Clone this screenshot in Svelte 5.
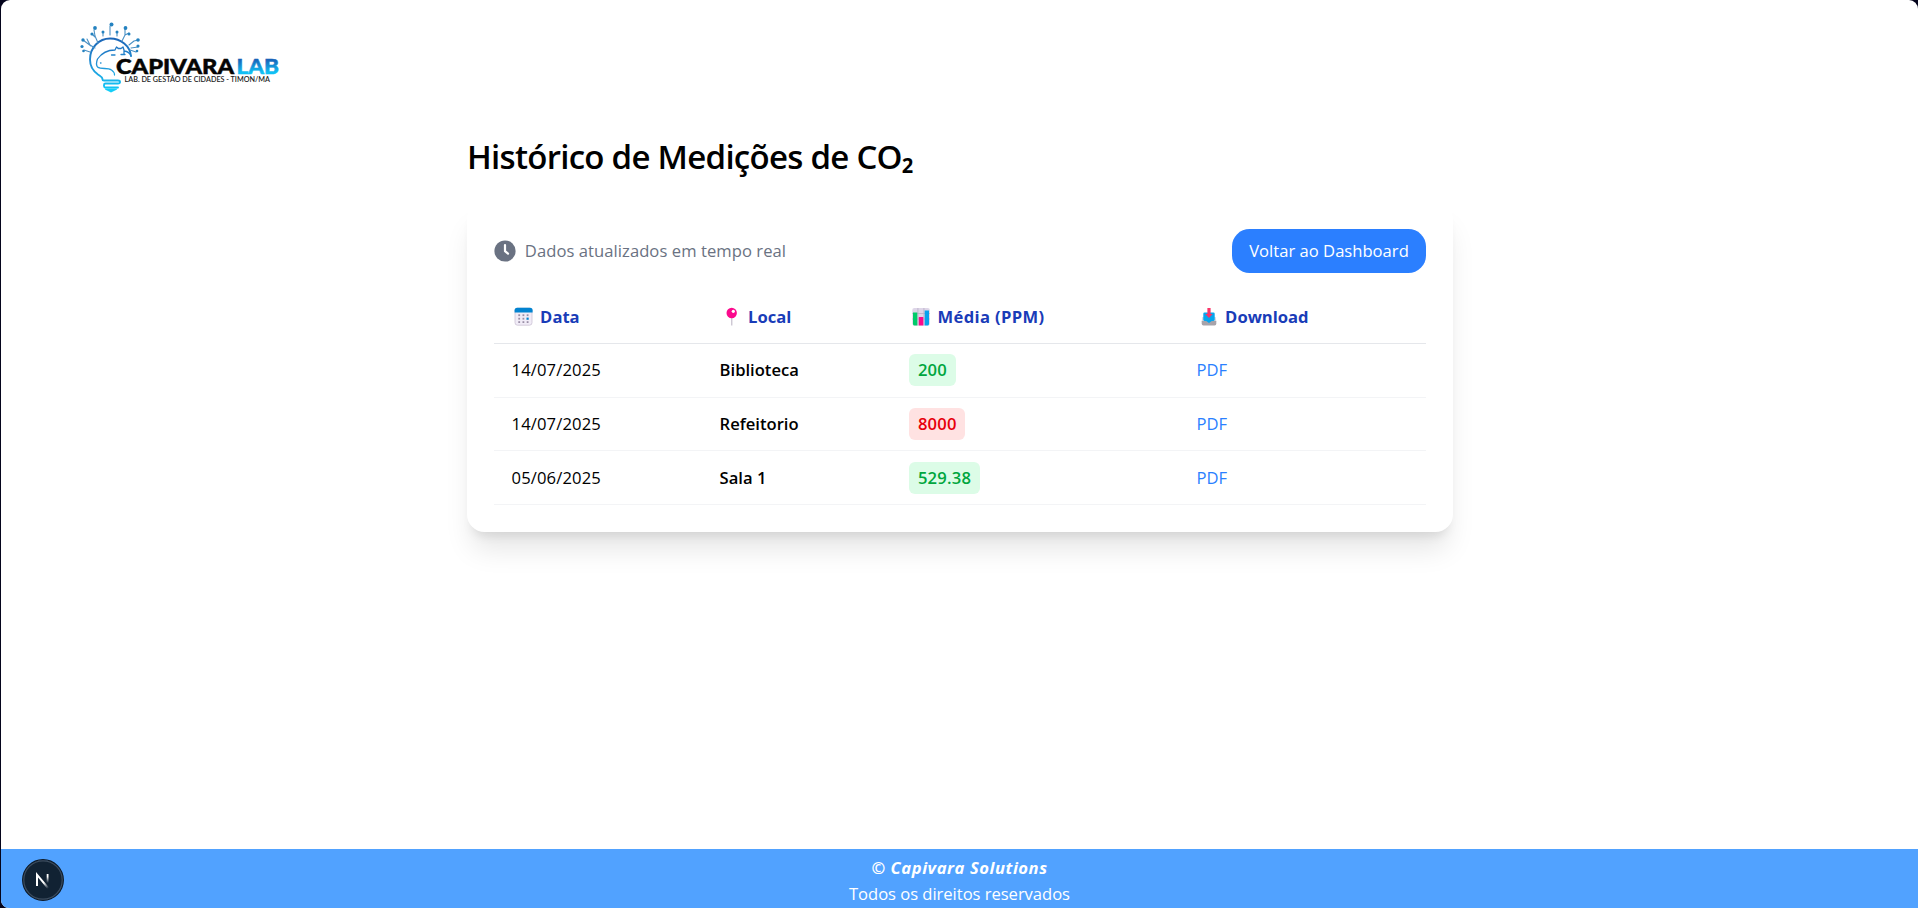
<script>
  const rows = [
    { date: '14/07/2025', place: 'Biblioteca', value: '200', high: false },
    { date: '14/07/2025', place: 'Refeitorio', value: '8000', high: true },
    { date: '05/06/2025', place: 'Sala 1', value: '529.38', high: false }
  ];
</script>

<div class="window">
  <div class="page">
    <header>
      <svg class="logo" width="220" height="80" viewBox="70 18 220 80" role="img" aria-label="Capivara Lab">
        <defs>
          <linearGradient id="bulb" gradientUnits="userSpaceOnUse" x1="0" y1="36" x2="0" y2="92">
            <stop offset="0" stop-color="#1b62b5" />
            <stop offset="0.5" stop-color="#2492d6" />
            <stop offset="1" stop-color="#0fcdfa" />
          </linearGradient>
          <linearGradient id="lab" gradientUnits="userSpaceOnUse" x1="0" y1="58" x2="0" y2="74">
            <stop offset="0.1" stop-color="#1763b8" />
            <stop offset="0.9" stop-color="#10c0f4" />
          </linearGradient>
        </defs>
        <g fill="none" stroke="url(#bulb)" stroke-linecap="round" stroke-linejoin="round">
          <path stroke-width="1.900" d="M131 56C130 46 121 38.500 110 38.500c-11 0-20 9-20 21 0 7 3 11.500 8 15 3 2 4.500 2.500 4.500 4.500v.5q0 1 1.500 1h14q2 0 2 1.500t-2 1.500h-12.500q-1.500 0-1.500 1.500v1q0 1.500 1.500 1.500h12.500" />
          <path stroke-width="1.300" d="M121 54.500h4m-13 .5h3M115 50l1.500-3 2 1.500M118 48.500h3l2-1.500 1 3v4M115 50c-9 0-14 4-17.500 9q-2 5 0 8c4 3 10 0 14 3q3 2 3 5M124 51c4 .5 6 2 7 5M100.500 63h.5M111.500 55h3" />
          <path stroke-width="1.100" stroke="#4a90c4" d="M95 48l-5-3-3-6M91 46l-8-6M90 52l-6-2M98 43l-3-7-1-6M95 37l-3-3M103 36v-4M110 35v-9M117 36v-4M122 41l3-6v-7M125 35l4-2M129 45l5-4 4-1M131 48l7-1M130 50l6 2" />
        </g>
        <path fill="#14cef8" d="M104.500 88.500h13q-.5 1.500-2.500 2l-4 2-4-2q-2-.5-2.500-2z" />
        <g fill="#2482c0">
          <circle cx="83" cy="40" r="1.700" /><circle cx="82" cy="46.500" r="1.600" /><circle cx="83.500" cy="51" r="1.300" />
          <circle cx="92" cy="34" r="1.600" /><circle cx="95" cy="28" r="1.900" /><circle cx="103" cy="32" r="1.500" />
          <circle cx="111.500" cy="24.500" r="2" /><circle cx="117" cy="32" r="1.500" /><circle cx="125.500" cy="28" r="1.900" />
          <circle cx="129" cy="34" r="1.500" /><circle cx="138" cy="40" r="1.800" /><circle cx="138" cy="46" r="1.600" />
          <circle cx="137" cy="51" r="1.300" />
        </g>
        <text class="brand" x="116" y="73.500" textLength="118" lengthAdjust="spacingAndGlyphs" fill="#050505" stroke="#050505">CAPIVARA</text>
        <text class="brand" x="236.500" y="73.500" textLength="42.500" lengthAdjust="spacingAndGlyphs" fill="url(#lab)" stroke="url(#lab)">LAB</text>
        <text class="tag" x="124.500" y="82.300" textLength="145.500" lengthAdjust="spacingAndGlyphs" fill="#222">LAB. DE GESTÃO DE CIDADES - TIMON/MA</text>
      </svg>
    </header>

    <main>
      <h1>Histórico de Medições de CO₂</h1>
      <section class="card">
        <div class="bar">
          <div class="status">
            <svg width="22" height="22" viewBox="0 0 22 22" aria-hidden="true">
              <circle cx="11" cy="11" r="10.600" fill="#6a7282" />
              <path d="M11 5v6.200l3 2.500" fill="none" stroke="#fff" stroke-width="2.200" stroke-linecap="round" stroke-linejoin="round" />
            </svg>
            <span>Dados atualizados em tempo real</span>
          </div>
          <button>Voltar ao Dashboard</button>
        </div>

        <table>
          <colgroup><col class="c1" /><col class="c2" /><col class="c3" /><col class="c4" /></colgroup>
          <thead>
            <tr>
              <th><div class="head">
                <svg width="24" height="20" viewBox="0 0 24 20" aria-hidden="true">
                  <rect x="3" y="1.200" width="17" height="17" rx="2.500" fill="#f1ecf7" stroke="#cbc3d4" stroke-width=".8" />
                  <path d="M2.600 5.500V3.300q0-2.500 2.500-2.500h13q2.500 0 2.500 2.500v2.200z" fill="#0283d0" />
                  <g fill="#998ea6">
                    <rect x="6.300" y="7.300" width="1.800" height="1.800" /><rect x="10.500" y="7.300" width="1.800" height="1.800" /><rect x="14.700" y="7.300" width="1.800" height="1.800" />
                    <rect x="6.300" y="10.800" width="1.800" height="1.800" /><rect x="10.500" y="10.800" width="1.800" height="1.800" />
                    <rect x="6.300" y="14.200" width="1.800" height="1.800" /><rect x="10.500" y="14.200" width="1.800" height="1.800" />
                    <rect x="14.700" y="14.200" width="1.800" height="1.800" />
                  </g>
                  <rect x="14.500" y="10.600" width="2.200" height="2.200" fill="#0283d0" />
                </svg>
                <span>Data</span>
              </div></th>
              <th><div class="head">
                <svg width="24" height="20" viewBox="0 0 24 20" aria-hidden="true">
                  <rect x="11.100" y="9" width="1.300" height="9.500" fill="#c9c3d0" />
                  <circle cx="11.700" cy="6" r="5.200" fill="#fb0a8d" />
                  <circle cx="13.300" cy="4.300" r="1.600" fill="#fff" />
                </svg>
                <span>Local</span>
              </div></th>
              <th><div class="head">
                <svg width="24" height="20" viewBox="0 0 24 20" aria-hidden="true">
                  <rect x="3.300" y="1" width="17.500" height="17.500" rx="2" fill="#ded6e8" />
                  <path d="M8.900 1v17.500M14.900 1v17.500M3.300 6.500h17.500M3.300 12h17.500" stroke="#b9afc6" stroke-width=".8" />
                  <path d="M4 5.500h4.300v13H5.500Q4 18.500 4 17z" fill="#00cb69" />
                  <rect x="9.800" y="10" width="4.500" height="8.500" fill="#fb0a8d" />
                  <path d="M15.700 3.500H20V17q0 1.500-1.500 1.500h-2.800z" fill="#06a3ee" />
                </svg>
                <span class="wide">Média (PPM)</span>
              </div></th>
              <th><div class="head">
                <svg width="24" height="20" viewBox="0 0 24 20" aria-hidden="true">
                  <path d="M5.300 10h13.400l.6 4.500H4.700z" fill="#dad6dd" />
                  <path d="M4.700 14h14.600v2.800q0 1.700-1.700 1.700H6.400q-1.700 0-1.700-1.700z" fill="#a7a3aa" />
                  <path d="M7.500 5.500h9q1.200 0 1.200 1.300v6q0 1-1.200 1.200h-1.700L12 16.100l-2.800-2.100H7.500q-1.200-.2-1.200-1.200v-6q0-1.300 1.200-1.300z" fill="#07a6ee" />
                  <path d="M10.400 1h3.200v6h2.100L12 11 8.300 7h2.100z" fill="#fa3468" />
                </svg>
                <span>Download</span>
              </div></th>
            </tr>
          </thead>
          <tbody>
            {#each rows as row}
              <tr>
                <td class="date">{row.date}</td>
                <td class="place">{row.place}</td>
                <td><span class="pill" class:high={row.high}>{row.value}</span></td>
                <td><a href="#pdf">PDF</a></td>
              </tr>
            {/each}
          </tbody>
        </table>
      </section>
    </main>

    <footer>
      <strong>© Capivara Solutions</strong>
      <span>Todos os direitos reservados</span>
    </footer>
  </div>

  <div class="dev">
    <svg width="42" height="42" viewBox="0 0 42 42" aria-hidden="true">
      <defs>
        <linearGradient id="stem" x1="0" y1="0" x2="0" y2="1"><stop offset="0.3" stop-color="#fff" /><stop offset="1" stop-color="#fff" stop-opacity="0" /></linearGradient>
        <linearGradient id="diag" gradientUnits="userSpaceOnUse" x1="19" y1="20" x2="26.500" y2="28"><stop offset="0.4" stop-color="#fff" /><stop offset="1" stop-color="#fff" stop-opacity="0.1" /></linearGradient>
      </defs>
      <circle cx="21" cy="21" r="20.300" fill="#112233" stroke="#0d1a28" stroke-width="1.300" />
      <circle cx="21" cy="21" r="19.200" fill="none" stroke="#3d4d5f" stroke-width="1.200" />
      <path d="M15 27V15.700L26 29" fill="none" stroke="url(#diag)" stroke-width="2" />
      <rect x="24.700" y="15" width="1.800" height="9" fill="url(#stem)" />
    </svg>
  </div>
</div>

<style>
  :global(body) { background: #04041c; overflow: hidden; }
  * { box-sizing: border-box; }
  .window {
    height: 908px;
    padding-left: 1px;
    font: 16.6px/26.4px 'Open Sans', 'Noto Sans', sans-serif;
    color: #000;
  }
  .page {
    height: 908px;
    display: flex;
    flex-direction: column;
    background: #fff;
    border-radius: 9px 9px 0 8px;
    overflow: hidden;
  }
  header { height: 116px; padding: 18px 0 0 69px; }
  .logo { display: block; }
  .brand { font: 900 21.500px Lato, sans-serif; stroke-width: 0.5px; }
  .tag { font: 600 7.500px Lato, sans-serif; }
  main { flex: 1; width: 986px; margin-left: 466px; padding-top: 21px; }
  h1 { margin: 0; height: 65px; font-size: 33px; line-height: 40px; font-weight: 600; letter-spacing: -0.720px; white-space: nowrap; }
  .card {
    height: 330px;
    padding: 27px 27px 0;
    background: #fff;
    border-radius: 17.600px;
    box-shadow: 0 22px 27.500px -5.500px rgb(0 0 0 / 0.1), 0 8.800px 11px -6.600px rgb(0 0 0 / 0.1);
  }
  .bar { display: flex; justify-content: space-between; align-items: center; height: 44px; margin-bottom: 18px; }
  .status { display: flex; align-items: center; gap: 8.800px; color: #6a7282; white-space: nowrap; letter-spacing: 0.060px; }
  button {
    width: 194px;
    height: 44px;
    padding: 0;
    border: 0;
    border-radius: 17.600px;
    background: #2b7fff;
    color: #fff;
    font: inherit;
    letter-spacing: 0.010px;
    white-space: nowrap;
  }
  table { width: 932px; table-layout: fixed; border-collapse: separate; border-spacing: 0; }
  .c1 { width: 208px; }
  .c2 { width: 189.500px; }
  .c3 { width: 287.500px; }
  th, td { padding: 0 0 0 17.600px; text-align: left; white-space: nowrap; }
  th { height: 53px; border-bottom: 1px solid #e5e7eb; color: #193cb8; font-weight: 700; }
  .head { display: flex; align-items: center; gap: 4.500px; }
  .wide { letter-spacing: 0.350px; }
  td { height: 53.700px; border-bottom: 1px solid #f3f4f6; }
  .date { letter-spacing: 0.120px; }
  .place { font-weight: 600; }
  .pill {
    display: inline-block;
    height: 32px;
    padding: 0 8.800px;
    border-radius: 6px;
    line-height: 32px;
    font-weight: 600;
    letter-spacing: 0.200px;
    background: #dcfce7;
    color: #00a63e;
  }
  .pill.high { background: #ffe2e2; color: #e7000b; }
  a { color: #2b7fff; text-decoration: none; }
  footer {
    height: 59px;
    padding-top: 6px;
    display: flex;
    flex-direction: column;
    align-items: center;
    background: #51a2ff;
    color: #fff;
  }
  strong { font-style: italic; font-weight: 700; letter-spacing: 0.550px; }
  footer span { letter-spacing: -0.040px; }
  .dev { position: absolute; left: 22px; top: 859px; width: 42px; height: 42px; }
  .dev svg { display: block; }
</style>
